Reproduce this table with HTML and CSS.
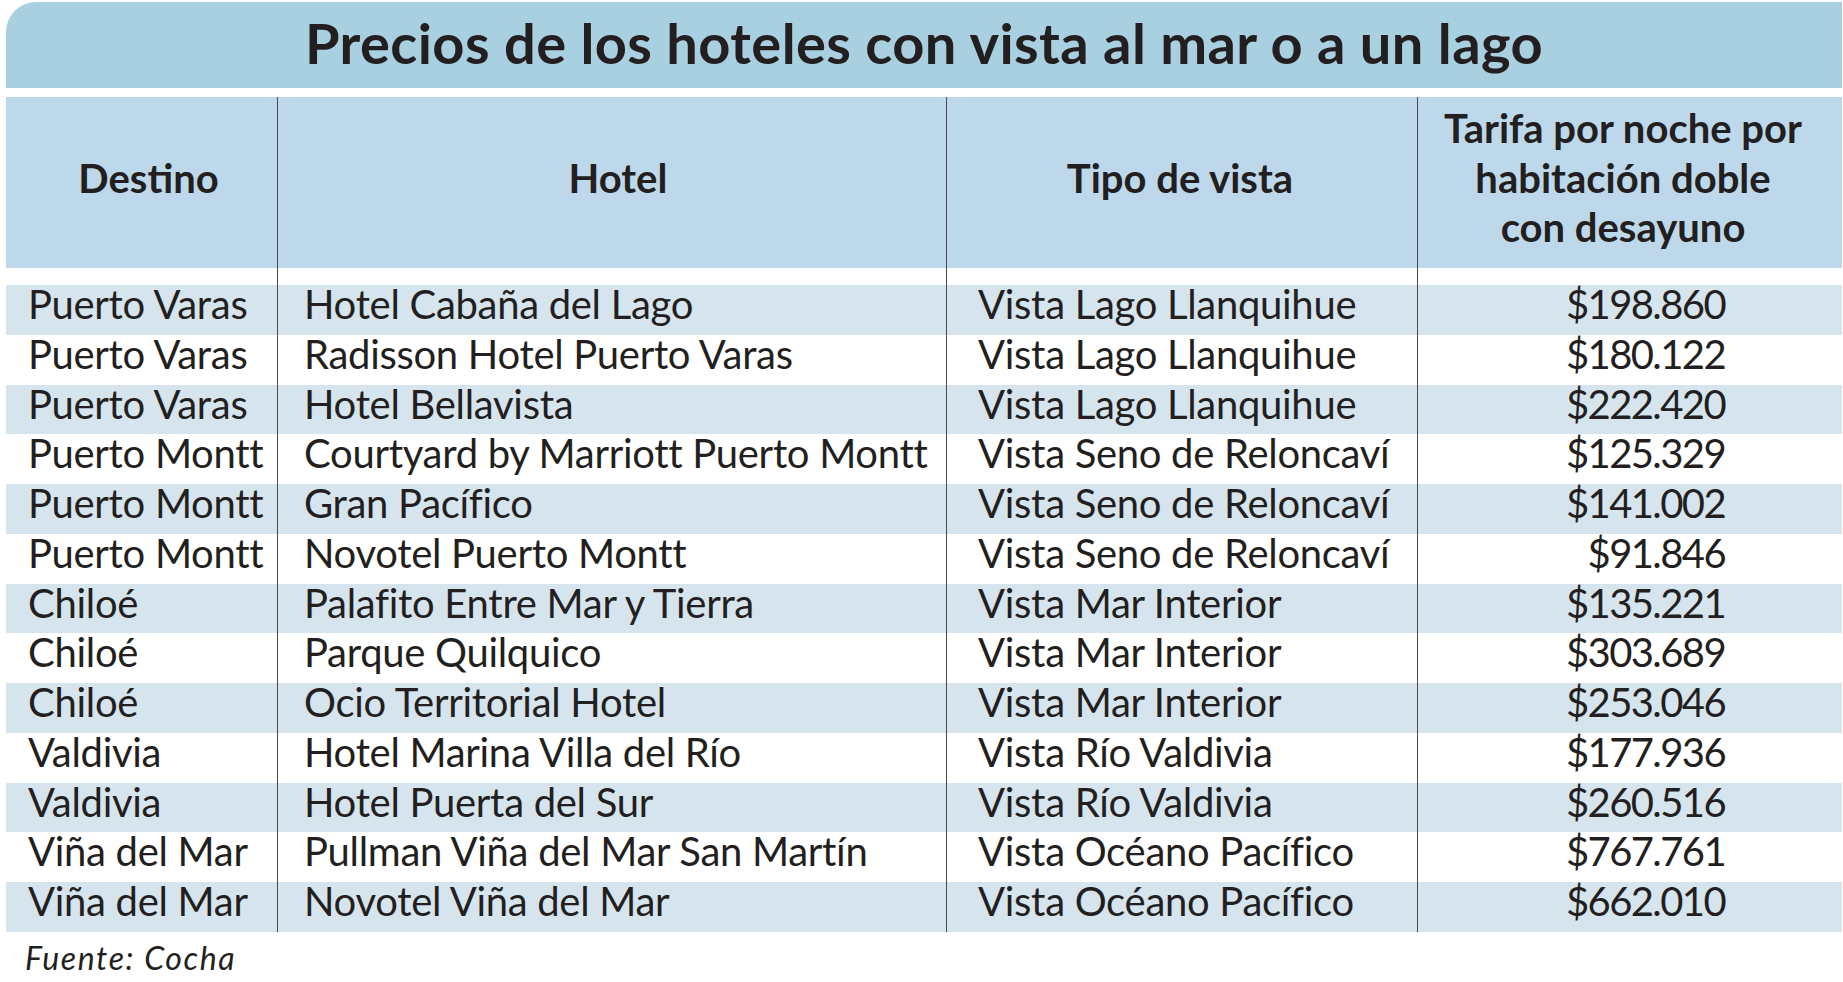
FILE: index.html
```html
<!DOCTYPE html>
<html lang="es">
<head>
<meta charset="utf-8">
<title>Precios de los hoteles con vista al mar o a un lago</title>
<link rel="stylesheet" href="styles.css">
</head>
<body>
<div class="page">
  <h1 class="title">Precios de los hoteles con vista al mar o a un lago</h1>
  <table class="prices">
    <colgroup>
      <col class="c-dest">
      <col class="c-hotel">
      <col class="c-vista">
      <col class="c-tarifa">
    </colgroup>
    <thead>
      <tr class="head">
        <th class="h-dest">Destino</th>
        <th class="h-hotel">Hotel</th>
        <th class="h-vista">Tipo de vista</th>
        <th class="h-tarifa">Tarifa por noche por<br>habitación doble<br>con desayuno</th>
      </tr>
      <tr class="spacer"><td></td><td></td><td></td><td></td></tr>
    </thead>
    <tbody>
      <tr><td class="dest">Puerto Varas</td><td class="hotel">Hotel Cabaña del Lago</td><td class="vista">Vista Lago Llanquihue</td><td class="tarifa">$198.860</td></tr>
      <tr><td class="dest">Puerto Varas</td><td class="hotel">Radisson Hotel Puerto Varas</td><td class="vista">Vista Lago Llanquihue</td><td class="tarifa">$180.122</td></tr>
      <tr><td class="dest">Puerto Varas</td><td class="hotel">Hotel Bellavista</td><td class="vista">Vista Lago Llanquihue</td><td class="tarifa">$222.420</td></tr>
      <tr><td class="dest">Puerto Montt</td><td class="hotel">Courtyard by Marriott Puerto Montt</td><td class="vista">Vista Seno de Reloncaví</td><td class="tarifa">$125.329</td></tr>
      <tr><td class="dest">Puerto Montt</td><td class="hotel">Gran Pacífico</td><td class="vista">Vista Seno de Reloncaví</td><td class="tarifa">$141.002</td></tr>
      <tr><td class="dest">Puerto Montt</td><td class="hotel">Novotel Puerto Montt</td><td class="vista">Vista Seno de Reloncaví</td><td class="tarifa">$91.846</td></tr>
      <tr><td class="dest">Chiloé</td><td class="hotel">Palafito Entre Mar y Tierra</td><td class="vista">Vista Mar Interior</td><td class="tarifa">$135.221</td></tr>
      <tr><td class="dest">Chiloé</td><td class="hotel">Parque Quilquico</td><td class="vista">Vista Mar Interior</td><td class="tarifa">$303.689</td></tr>
      <tr><td class="dest">Chiloé</td><td class="hotel">Ocio Territorial Hotel</td><td class="vista">Vista Mar Interior</td><td class="tarifa">$253.046</td></tr>
      <tr><td class="dest">Valdivia</td><td class="hotel">Hotel Marina Villa del Río</td><td class="vista">Vista Río Valdivia</td><td class="tarifa">$177.936</td></tr>
      <tr><td class="dest">Valdivia</td><td class="hotel">Hotel Puerta del Sur</td><td class="vista">Vista Río Valdivia</td><td class="tarifa">$260.516</td></tr>
      <tr><td class="dest">Viña del Mar</td><td class="hotel">Pullman Viña del Mar San Martín</td><td class="vista">Vista Océano Pacífico</td><td class="tarifa">$767.761</td></tr>
      <tr><td class="dest">Viña del Mar</td><td class="hotel">Novotel Viña del Mar</td><td class="vista">Vista Océano Pacífico</td><td class="tarifa">$662.010</td></tr>
    </tbody>
  </table>
  <p class="source">Fuente: Cocha</p>
</div>
</body>
</html>
```
FILE: styles.css
```css
html, body {
  margin: 0;
  padding: 0;
  background: #ffffff;
}

body {
  font-family: Lato, "Open Sans", "Liberation Sans", sans-serif;
  color: #231f20;
}

.page {
  width: 1843px;
  padding: 2px 1px 0 6px;
  box-sizing: border-box;
}

.title {
  margin: 0;
  height: 86px;
  box-sizing: border-box;
  padding-bottom: 5px;
  background: #a8d0e0;
  border-top-left-radius: 30px;
  font-size: 56px;
  line-height: 81px;
  letter-spacing: 0.4px;
  font-weight: 700;
  text-align: center;
  white-space: nowrap;
}

.prices {
  margin-top: 9px;
  width: 1836px;
  table-layout: fixed;
  border-collapse: separate;
  border-spacing: 0;
  font-size: 40px;
}

.c-dest { width: 271px; }
.c-hotel { width: 669px; }
.c-vista { width: 471px; }
.c-tarifa { width: 425px; }

.prices th,
.prices td {
  padding: 0;
  white-space: nowrap;
}

.prices th:not(:first-child),
.prices td:not(:first-child) {
  border-left: 1.5px solid #4a4a4a;
}

.prices .head th {
  height: 171px;
  box-sizing: border-box;
  padding-bottom: 8px;
  background: #bcd8ea;
  font-weight: 700;
  line-height: 49.5px;
  text-align: center;
  vertical-align: middle;
}

.prices .head th.h-dest { padding-left: 14px; }
.prices .head th.h-hotel { padding-left: 12px; }
.prices .head th.h-vista { padding-right: 4px; }
.prices .head th.h-tarifa { padding-right: 14px; }

.prices .spacer td {
  height: 17px;
}

.prices tbody td {
  height: 49.75px;
  box-sizing: border-box;
  padding-bottom: 10.75px;
  line-height: 39px;
  font-weight: 400;
  letter-spacing: -0.3px;
  vertical-align: middle;
}

.prices tbody tr:nth-child(odd) td {
  background: #d6e4ee;
}

.prices tbody td.dest { padding-left: 22px; }
.prices tbody td.hotel { padding-left: 26px; }
.prices tbody td.vista { padding-left: 31px; }
.prices tbody td.tarifa {
  padding-right: 117px;
  text-align: right;
  letter-spacing: -1.6px;
}

.source {
  margin: 6px 0 0 19px;
  font-size: 32px;
  line-height: 40px;
  letter-spacing: 1.6px;
  font-style: italic;
}
```
